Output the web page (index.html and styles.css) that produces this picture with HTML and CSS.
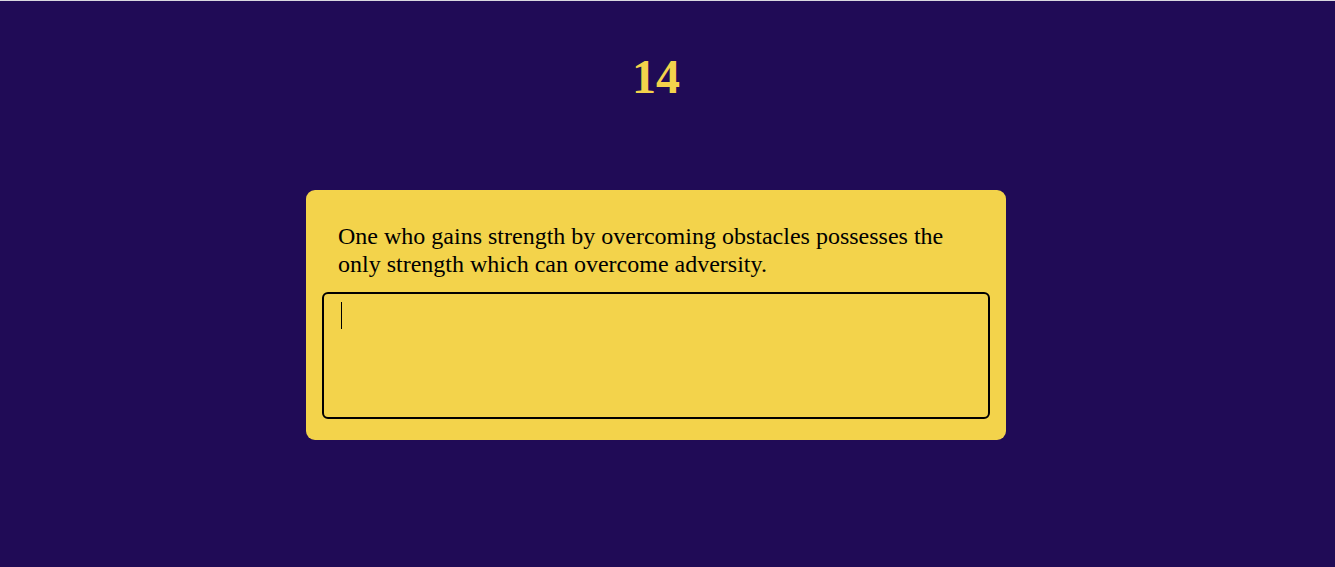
FILE: index.html
```html
<!DOCTYPE html>
<html lang="en">
<head>
<meta charset="utf-8">
<title>14</title>
<link rel="stylesheet" href="styles.css">
</head>
<body>
<main class="page">
  <h1 class="counter">14</h1>
  <section class="card">
    <p class="quote">One who gains strength by overcoming obstacles possesses the only strength which can overcome adversity.</p>
    <div class="field">
      <textarea class="answer" autofocus></textarea>
      <span class="caret"></span>
    </div>
  </section>
</main>
</body>
</html>
```
FILE: styles.css
```css
html, body {
  margin: 0;
  padding: 0;
  height: 100%;
}
body {
  background: #200b56;
  border-top: 1px solid #d9d9e0;
  box-sizing: border-box;
  font-family: "Liberation Serif", "Times New Roman", serif;
}
.page {
  display: flex;
  flex-direction: column;
  align-items: center;
  padding-right: 23px;
}
.counter {
  margin: 48px 0 0;
  height: 141px;
  font-size: 48px;
  font-weight: bold;
  color: #f3d34b;
  line-height: 55px;
}
.card {
  width: 700px;
  box-sizing: border-box;
  background: #f3d34b;
  border-radius: 9px;
  padding: 16px 16px 21px;
}
.quote {
  margin: 0;
  padding: 16px 16px 14px;
  font-size: 24px;
  line-height: 28px;
  color: #000;
}
.field {
  position: relative;
  margin-top: 0;
}
.answer {
  display: block;
  width: 668px;
  height: 127px;
  box-sizing: border-box;
  margin: 0;
  padding: 8px 16px;
  border: 2px solid #000;
  border-radius: 6px;
  background: transparent;
  font-family: "Liberation Serif", "Times New Roman", serif;
  font-size: 24px;
  resize: none;
  outline: none;
  caret-color: #000;
}
.caret {
  position: absolute;
  left: 19px;
  top: 10px;
  width: 1px;
  height: 27px;
  background: #000;
  pointer-events: none;
}
```
